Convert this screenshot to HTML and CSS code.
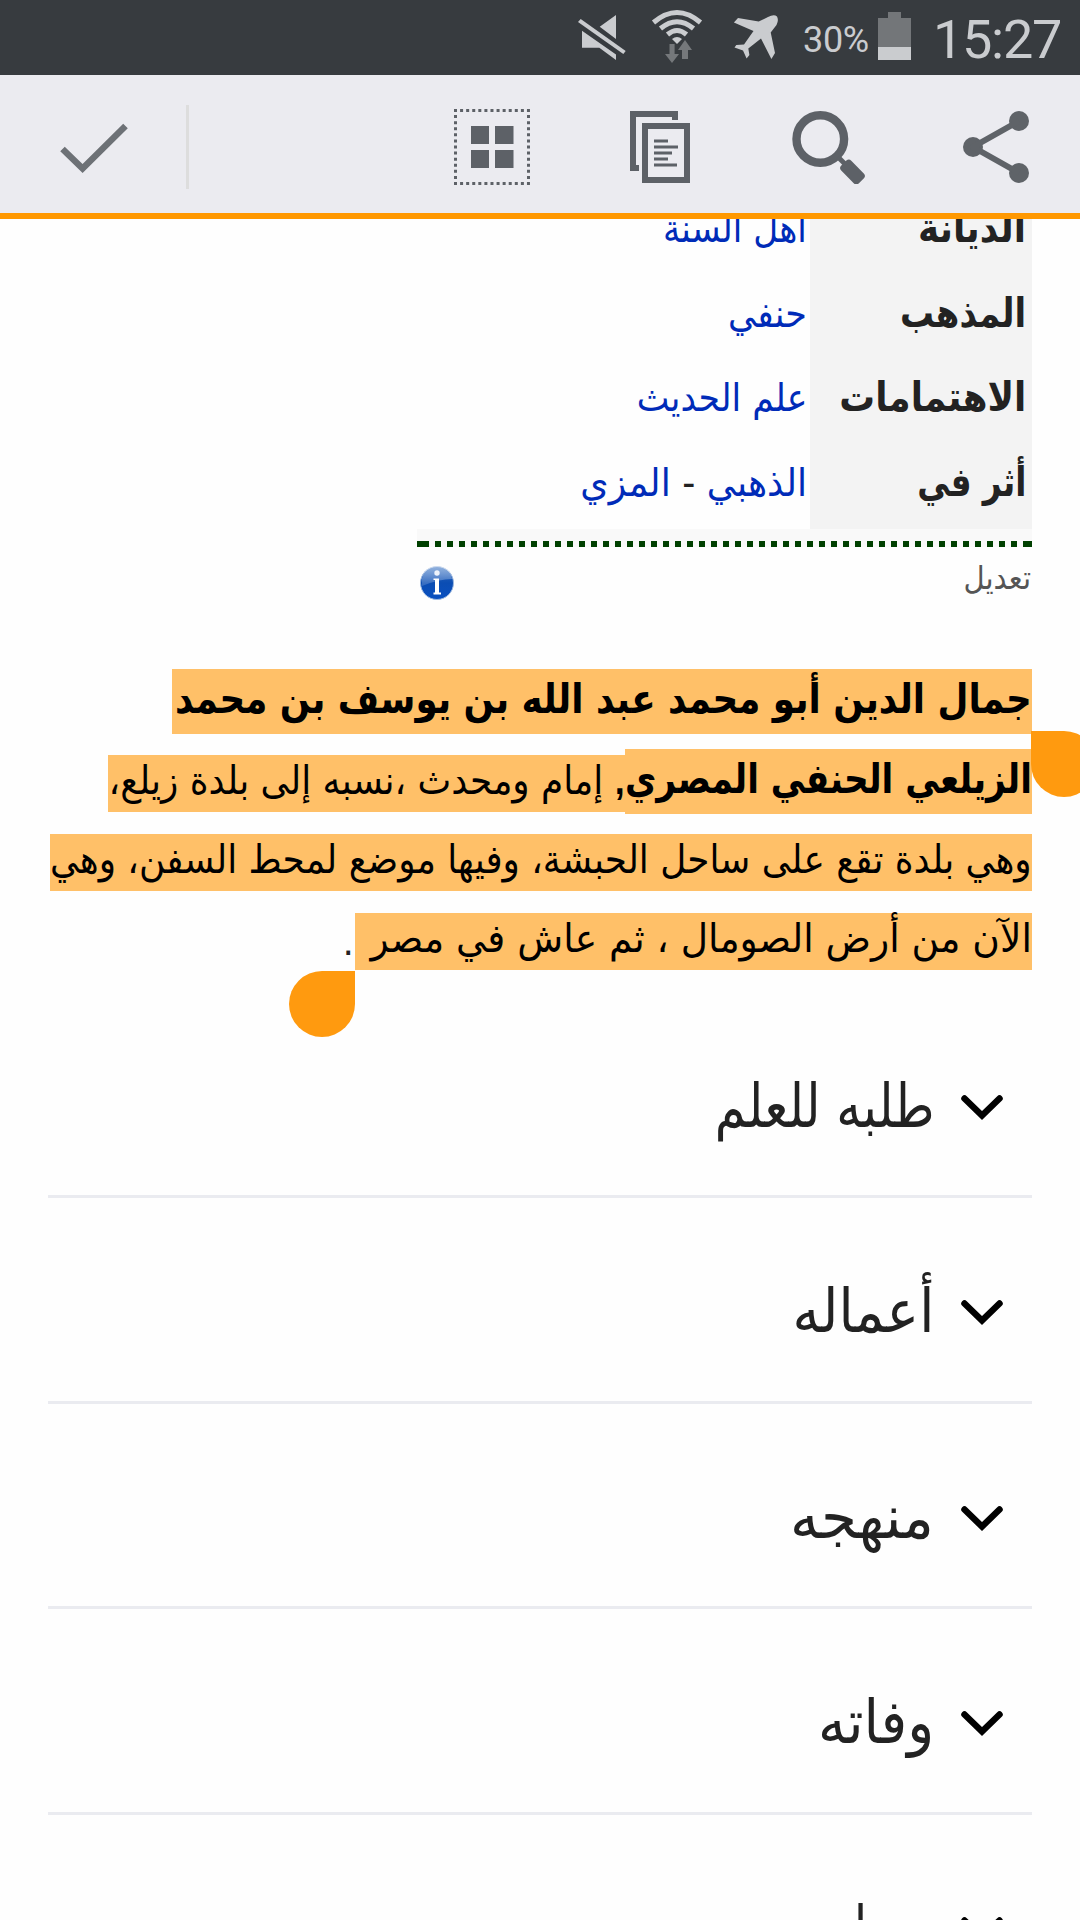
FILE: index.html
```html
<!DOCTYPE html>
<html lang="ar" dir="rtl">
<head>
<meta charset="utf-8">
<title>جمال الدين الزيلعي</title>
<link rel="stylesheet" href="styles.css">
</head>
<body>
<div class="screen">
  <header class="status" dir="ltr">
    <svg class="status-icons" width="220" height="75" viewBox="570 0 220 75">
      <g fill="#cacccf">
        <path d="M582 30.700L616 54.500V60L599.300 47.700H582ZM599.700 26.700L616 15V39Z"/>
        <path d="M578 22L580.700 19L625.700 51L623.300 54Z"/>
        <path d="M672 39Q677 35 682 39L677 44Z"/>
        <path d="M733.900 22.500L738 18L758.700 21.500L768 17Q774 14 777 16.500Q779 20 776.500 25L770.700 32.500L775 53L771.400 59L761 38.500L748.300 48.500L749.400 55L746.600 58.500L743 50.500L734.500 47.500L736.300 45L744 44.500L753.500 31Z"/>
      </g>
      <g fill="none" stroke="#cacccf" stroke-width="5">
        <path d="M653.500 22.500Q677 2.500 700.500 22.500"/>
        <path d="M660.500 28.500Q677 15 693.500 28.500"/>
        <path d="M667.500 34.500Q677 26.500 686.500 34.500"/>
      </g>
      <g fill="#75787b">
        <path d="M669.500 44H674.600V54H679L672 63L665 54H669.500Z"/>
        <path d="M682 59V50H678L685 40L692 50H688V59Z"/>
      </g>
    </svg>
    <span class="battery-level">30%</span>
    <svg class="battery" width="33" height="48" viewBox="0 0 33 48">
      <path fill="#737679" d="M10 0H23V6H33V35H0V6H10Z"/>
      <path fill="#cacccf" d="M0 35H33V48H0Z"/>
    </svg>
    <span class="clock">15:27</span>
  </header>

  <nav class="toolbar" dir="ltr">
    <div class="done">
      <svg width="70" height="52" viewBox="60 122 70 52"><path d="M62.500 149L82.600 168.500L125.500 126" fill="none" stroke="#6d7176" stroke-width="6.500"/></svg>
    </div>
    <svg class="select-all" width="76" height="76" viewBox="0 0 76 76">
      <g fill="none" stroke="#5d6167" stroke-width="3" stroke-dasharray="3 3.080"><path d="M0 1.500H76"/><path d="M0 74.500H76"/><path d="M1.500 6.080V73"/><path d="M74.500 6.080V73"/></g>
      <path fill="#5d6167" d="M17 17H35V35H17ZM41 17H59.500V35H41ZM17 41H35V59H17ZM41 41H59.500V59H41Z"/>
    </svg>
    <svg class="copy" width="60" height="72" viewBox="630 111 60 72">
      <g fill="none" stroke="#5d6167" stroke-width="6"><path d="M675 120V114H633V168H639"/><path d="M645 126H687V180H645Z"/></g>
      <path stroke="#5d6167" stroke-width="3" d="M654 141H668M654 147H678M654 153H672M654 159H668M654 165H677"/>
    </svg>
    <svg class="search" width="73" height="73" viewBox="792 111 73 73">
      <circle cx="820.300" cy="139" r="23.800" fill="none" stroke="#5d6167" stroke-width="8.400"/>
      <path d="M838 157L848 167" stroke="#5d6167" stroke-width="5"/>
      <rect x="840" y="165" width="25" height="14" rx="3.500" fill="#5d6167" transform="rotate(46 852.500 172)"/>
    </svg>
    <svg class="share" width="66" height="72" viewBox="963 111 66 72">
      <g fill="#5f6368"><circle cx="1019" cy="121" r="10"/><circle cx="973" cy="147" r="10"/><circle cx="1019" cy="173" r="10"/></g>
      <path d="M1019 121L973 147L1019 173" fill="none" stroke="#5f6368" stroke-width="6"/>
    </svg>
  </nav>

  <main class="page">
    <section class="infobox">
      <div class="row"><div class="label"><span class="l1">الديانة</span></div><div class="value"><a class="v1">أهل السنة</a></div></div>
      <div class="row"><div class="label"><span class="l2">المذهب</span></div><div class="value"><a class="v2">حنفي</a></div></div>
      <div class="row"><div class="label"><span class="l3">الاهتمامات</span></div><div class="value"><a class="v3">علم الحديث</a></div></div>
      <div class="row last"><div class="label"><span class="l4">أثر في</span></div><div class="value"><span class="v4"><a>الذهبي</a> - <a>المزي</a></span></div></div>
      <div class="dots"></div>
      <div class="edit">
        <span>تعديل</span>
        <svg width="36" height="36" viewBox="0 0 36 36">
          <defs>
            <linearGradient id="ball" x1="0" y1="0" x2="0" y2="1"><stop offset="0" stop-color="#2f6cc0"/><stop offset=".5" stop-color="#0b4db3"/><stop offset="1" stop-color="#0a50c0"/></linearGradient>
            <linearGradient id="gloss" x1="0" y1="0" x2="0" y2="1"><stop offset="0" stop-color="#fff" stop-opacity=".5"/><stop offset="1" stop-color="#fff" stop-opacity=".15"/></linearGradient>
          </defs>
          <circle cx="18" cy="18" r="16.500" fill="url(#ball)" stroke="#9db9e0"/>
          <path fill="url(#gloss)" d="M3 17A15 15 0 0 1 33 14Q20 14 3 21Z"/>
          <circle cx="18" cy="8" r="2.700" fill="#eef3fb"/>
          <path fill="#fff" d="M14.500 13.500H20V27.500H22V29.500H14.500V27.500H16V15H14.500Z"/>
        </svg>
      </div>
    </section>

    <article class="intro">
      <div class="line first"><b class="mark w1"><span>جمال الدين أبو محمد عبد الله بن يوسف بن محمد</span></b></div>
      <div class="line second"><b class="mark w2"><span>الزيلعي الحنفي المصري</span></b><div class="mark w3"><span><b class="comma">,</b> إمام ومحدث ،نسبه إلى بلدة زيلع،</span></div></div>
      <div class="line"><div class="mark w4"><span>وهي بلدة تقع على ساحل الحبشة، وفيها موضع لمحط السفن، وهي</span></div></div>
      <div class="line"><div class="mark w5"><span>الآن من أرض الصومال ، ثم عاش في مصر</span></div><div class="stop">.</div></div>
      <i class="handle start"></i>
      <i class="handle end"></i>
    </article>

    <section class="sections">
      <h2><svg class="chev" width="42" height="26" viewBox="0 0 42 26"><path d="M3.500 3.500L21 20.500L38.500 3.500" fill="none" stroke="#000" stroke-width="6.500" stroke-linecap="round"/></svg><span class="h1">طلبه للعلم</span></h2>
      <h2><svg class="chev" width="42" height="26" viewBox="0 0 42 26"><path d="M3.500 3.500L21 20.500L38.500 3.500" fill="none" stroke="#000" stroke-width="6.500" stroke-linecap="round"/></svg><span class="h2">أعماله</span></h2>
      <h2><svg class="chev" width="42" height="26" viewBox="0 0 42 26"><path d="M3.500 3.500L21 20.500L38.500 3.500" fill="none" stroke="#000" stroke-width="6.500" stroke-linecap="round"/></svg><span class="h3">منهجه</span></h2>
      <h2><svg class="chev" width="42" height="26" viewBox="0 0 42 26"><path d="M3.500 3.500L21 20.500L38.500 3.500" fill="none" stroke="#000" stroke-width="6.500" stroke-linecap="round"/></svg><span class="h4">وفاته</span></h2>
      <h2><svg class="chev" width="42" height="26" viewBox="0 0 42 26"><path d="M3.500 3.500L21 20.500L38.500 3.500" fill="none" stroke="#000" stroke-width="6.500" stroke-linecap="round"/></svg><span class="h5">مصادر</span></h2>
    </section>
  </main>
</div>
</body>
</html>
```
FILE: styles.css
```css
* { box-sizing: border-box; }
body { margin: 0; background: #fefefe; }
.screen {
  width: 1080px; height: 1920px; overflow: hidden;
  display: flex; flex-direction: column;
  font-family: "DejaVu Sans", sans-serif; color: #222; white-space: nowrap;
}
svg { display: block; flex: none; }

/* status bar */
.status {
  height: 75px; flex: none; background: #373b3f; color: #cacccf;
  display: flex; align-items: flex-start; padding-left: 570px;
  font-family: Roboto, sans-serif;
}
.battery-level { width: 88px; padding-left: 13px; font-size: 36px; line-height: 42px; padding-top: 19px; letter-spacing: -.3px; }
.battery { margin-top: 12px; }
.clock { padding-left: 22px; padding-top: 8px; font-size: 54px; line-height: 63px; letter-spacing: -1.300px; }

/* selection toolbar */
.toolbar {
  height: 144px; flex: none; background: #ebebf0; border-bottom: 6px solid #ff9800;
  display: flex; align-items: flex-start; padding-top: 30px;
}
.done { width: 189px; height: 84px; border-right: 3px solid #ddd; padding: 17px 0 0 60px; }
.select-all { margin: 4px 0 0 265px; }
.copy { margin: 6px 0 0 100px; }
.search { margin: 6px 0 0 102px; }
.share { margin: 6px 0 0 98px; }

.page { flex: 1; min-height: 0; overflow: hidden; padding: 0 48px; }

/* infobox */
.infobox { width: 615px; margin-top: -31px; }
.row { display: flex; height: 84.700px; line-height: 84.700px; }
.last { height: 86.900px; }
.label { width: 222px; background: #f3f3f3; padding-right: 6px; font-weight: 700; font-size: 35px; }
.value { flex: 1; padding-right: 3px; font-size: 35px; }
/* each word is scaled about its baseline at the right edge */
.row span, .value > a, .mark span, h2 span, .edit span {
  display: inline-block; transform-origin: 100% calc(50% + .346em);
}
.value a { color: #002bb8; }
.l1, .l3 { transform: scale(1.020, 1.15); }
.l2 { transform: scale(.97, 1.15); }
.l4 { transform: scale(.93, 1.15); }
.v1 { transform: scale(.98, 1.1); }
.v2 { transform: scale(1, 1.1); }
.v3 { transform: scale(.99, 1.1); }
.v4 { transform: scale(1.035, 1.1); }
.dots {
  height: 18px;
  background:
    linear-gradient(#004000, #004000) 0 12px / 6px 6px no-repeat,
    linear-gradient(#004000, #004000) 100% 12px / 3px 6px no-repeat,
    repeating-linear-gradient(90deg, transparent 0 6px, #004000 6px 12px) 0 12px / 100% 6px no-repeat,
    #f9f9f9;
}
.edit {
  height: 66px; display: flex; justify-content: space-between; align-items: flex-start;
  padding: 0 1px 0 2px; font-size: 28px; line-height: 65px; color: #555;
}
.edit span { transform: scale(1.040, 1.15); }
.edit svg { margin-top: 18px; }

/* selected paragraph */
.intro { position: relative; height: 319px; margin-top: 49px; font-size: 36px; }
.line { height: 79px; display: flex; align-items: flex-start; padding-top: 14px; }
.first { padding-top: 7px; }
.second { padding-top: 8px; }
.mark { display: block; height: 57px; line-height: 54px; background: #ffc068; color: #000; }
b.mark { height: 65px; line-height: 64px; }
.w1 { width: 860px; }
.w1 span { transform: scale(.992, 1.15); }
.w2 { width: 407px; }
.w2 span { transform: scale(.951, 1.15); }
.w3 { width: 517px; margin-top: 6px; }
.w3 span { transform: scale(.995, 1.1); }
.comma { font-family: "Liberation Sans", sans-serif; }
.w4 { width: 982px; }
.w4 span { transform: scale(.995, 1.1); }
.w5 { width: 677px; }
.w5 span { transform: scale(1.045, 1.1); }
.stop { line-height: 59px; padding-right: 1px; }
.handle { position: absolute; height: 66px; background: #ff9a0f; }
.start { left: 983px; top: 69px; width: 66px; border-radius: 0 33px 33px 33px; }
.end { left: 241px; top: 309px; width: 66px; border-radius: 33px 0 33px 33px; }

/* collapsed sections */
.sections { padding-top: 12px; }
h2 {
  height: 205.400px; margin: 0; border-bottom: 3px solid #eaebf0; padding: 0 29px 0 0;
  display: flex; align-items: flex-start; font-weight: 400; font-size: 54px;
}
.chev { margin-top: 102px; }
h2 span { line-height: 80px; margin: 76px 27px 0 0; }
.h1 { transform: scale(.925, 1.12); }
.h2 { transform: scale(1.01, 1.12); }
.h3 { transform: scale(1.075, 1.12); }
.h4 { transform: scale(1.035, 1.12); }
.h5 { transform: scale(.87, 1.12); }
```
